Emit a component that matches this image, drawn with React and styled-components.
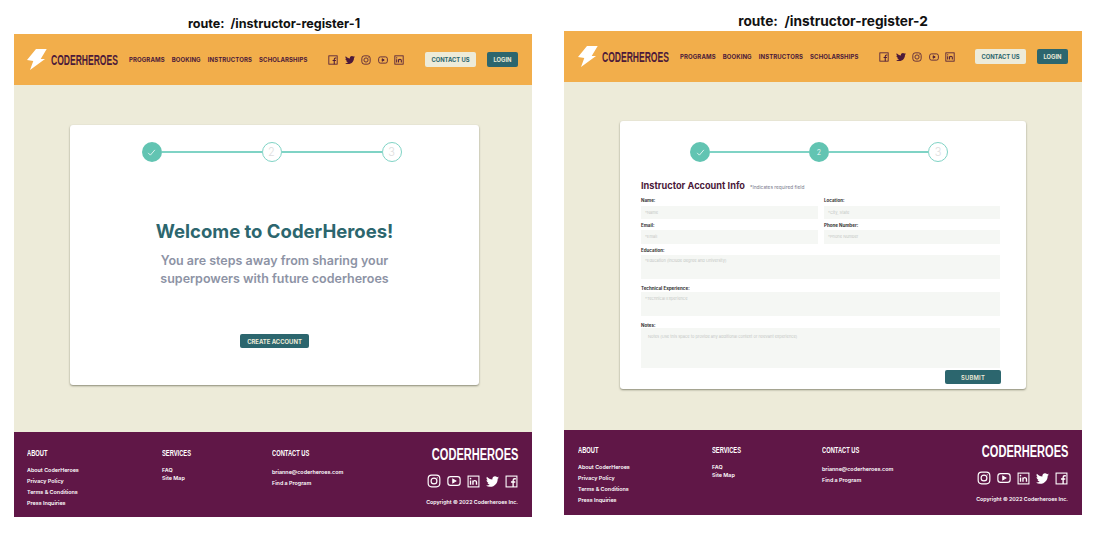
import styled, { createGlobalStyle } from 'styled-components';
import { FaTwitter } from 'react-icons/fa';

const GlobalStyle = createGlobalStyle`
  body {
    margin: 0;
    background: #fff;
    font-family: Inter, "Noto Sans", sans-serif;
  }
`;

const Page = styled.div`
  display: flex;
  gap: 32px;
  width: 1098px;
  height: 540px;
  padding-left: 14px;
  box-sizing: border-box;
  overflow: hidden;
`;

const Column = styled.div`
  width: 518px;
  padding-top: ${(p) => p.$top}px;
`;

const Route = styled.div`
  height: 20px;
  line-height: 20px;
  font-size: ${(p) => p.$size}px;
  font-weight: 700;
  color: #111;
  text-align: center;
  white-space: pre;
  padding-left: ${(p) => p.$shift}px;
`;

const Header = styled.header`
  display: flex;
  align-items: center;
  height: 51px;
  background: #f2ae4b;
  padding: 0 14px 0 ${(p) => p.$inset}px;
  box-sizing: border-box;
`;

const LogoLink = styled.div`
  display: flex;
  align-items: center;
  gap: 4px;
  width: 102px;
  flex-shrink: 0;
`;

const BoltMark = styled.svg`
  flex-shrink: 0;
`;

const LogoText = styled.span`
  font-family: "Liberation Sans", sans-serif;
  font-weight: 700;
  font-size: ${(p) => p.$size}px;
  line-height: 1;
  color: ${(p) => p.$color};
  white-space: nowrap;
  flex-shrink: 0;
  transform: scaleX(${(p) => p.$squeeze});
  transform-origin: ${(p) => p.$origin} center;
`;

const Nav = styled.nav`
  display: flex;
  gap: 7px;
  width: 199px;
  flex-shrink: 0;
`;

const NavItem = styled.span`
  font-size: 6px;
  font-weight: 700;
  color: #4c1a3a;
  letter-spacing: 0.1px;
  white-space: nowrap;
`;

const Socials = styled.div`
  display: flex;
  align-items: center;
  gap: ${(p) => p.$gap}px;
  color: ${(p) => p.$color};
`;

const FooterSocials = styled(Socials)`
  margin-top: 11px;
`;

const Actions = styled.div`
  display: flex;
  gap: 11px;
  margin-left: auto;
`;

const HeaderButton = styled.button`
  height: 15px;
  width: ${(p) => p.$width}px;
  padding: 0;
  border: 0;
  border-radius: 2px;
  font-family: inherit;
  font-size: 5.8px;
  font-weight: 700;
  background: ${(p) => (p.$light ? '#edebd9' : '#2c666e')};
  color: ${(p) => (p.$light ? '#2c666e' : '#edebd9')};
`;

const Main = styled.main`
  height: ${(p) => p.$height}px;
  background: #edebd9;
  box-sizing: border-box;
  padding: ${(p) => p.$top}px 0 0 56px;
`;

const Card = styled.section`
  width: ${(p) => p.$width}px;
  height: ${(p) => p.$height}px;
  background: #fff;
  border-radius: 3px;
  box-shadow: 0 1px 2px rgba(60, 60, 40, 0.55);
  box-sizing: border-box;
  padding-top: ${(p) => p.$top}px;
`;

const Stepper = styled.div`
  display: flex;
  align-items: center;
  justify-content: center;
  padding-right: ${(p) => p.$shift}px;
`;

const Step = styled.div`
  width: 20px;
  height: 20px;
  border-radius: 50%;
  box-sizing: border-box;
  display: flex;
  align-items: center;
  justify-content: center;
  font-weight: 300;
  background: ${(p) => (p.$on ? '#62c4b2' : '#fff')};
  border: ${(p) => (p.$on ? '0' : '1px solid #7fd3c5')};
  color: ${(p) => (p.$on ? '#fff' : '#ddd')};
  font-size: ${(p) => (p.$on ? 7 : 11)}px;
`;

const StepLine = styled.div`
  width: ${(p) => p.$width}px;
  height: 2px;
  background: #7fd3c5;
`;

const Welcome = styled.div`
  text-align: center;
  margin-top: 57px;
`;

const WelcomeTitle = styled.h1`
  margin: 0;
  font-size: 18.5px;
  line-height: 24px;
  font-weight: 700;
  color: #2c666e;
  white-space: nowrap;
`;

const WelcomeText = styled.p`
  margin: 9px 0 0;
  font-size: 12.5px;
  line-height: 18px;
  font-weight: 600;
  color: #8d93a5;
`;

const CreateButton = styled.button`
  display: block;
  width: 69px;
  height: 14px;
  margin: 46px auto 0;
  padding: 0;
  border: 0;
  border-radius: 2px;
  background: #2c666e;
  color: #edebd9;
  font-family: inherit;
  font-size: 5.9px;
  font-weight: 700;
`;

const Form = styled.form`
  padding: 18px 25px 0 21px;
`;

const FormHead = styled.div`
  display: flex;
  align-items: baseline;
  gap: 5px;
  height: 11px;
  line-height: 11px;
`;

const FormTitle = styled.h2`
  margin: 0;
  font-size: 9.2px;
  font-weight: 700;
  color: #4c1a3a;
  white-space: nowrap;
`;

const FormNote = styled.span`
  font-size: 4.8px;
  color: #77778a;
  white-space: nowrap;
`;

const FormGrid = styled.div`
  display: grid;
  grid-template-columns: 177px 176px;
  column-gap: 6px;
  margin-top: 7px;
`;

const Field = styled.div`
  grid-column: ${(p) => (p.$wide ? '1 / -1' : 'auto')};
`;

const Label = styled.div`
  height: 5px;
  line-height: 5px;
  font-size: 4.5px;
  font-weight: 700;
  color: #333;
  margin-bottom: ${(p) => p.$gap}px;
`;

const Input = styled.div`
  height: ${(p) => p.$height}px;
  margin-bottom: ${(p) => p.$gap}px;
  background: #f5f7f4;
  color: #c4c7c4;
  font-size: 4px;
  line-height: 5px;
  padding: ${(p) => p.$pad}px 0 0 ${(p) => p.$indent || 4}px;
  box-sizing: border-box;
  white-space: nowrap;
`;

const SubmitRow = styled.div`
  display: flex;
  justify-content: flex-end;
  margin-top: 2px;
`;

const SubmitButton = styled.button`
  width: 56px;
  height: 14px;
  padding: 0;
  border: 0;
  border-radius: 2px;
  background: #2c666e;
  color: #edebd9;
  font-family: inherit;
  font-size: 5.8px;
  font-weight: 600;
  letter-spacing: 0.2px;
`;

const Footer = styled.footer`
  display: grid;
  grid-template-columns: ${(p) => 148 - p.$inset}px 110px 1fr auto;
  height: 85px;
  background: #601747;
  padding: ${(p) => p.$top}px 14px 0 ${(p) => p.$inset}px;
  box-sizing: border-box;
  color: #fff;
`;

const FooterHead = styled.div`
  font-family: "Liberation Sans", sans-serif;
  font-size: 9px;
  font-weight: 700;
  line-height: 9px;
  margin-bottom: ${(p) => p.$gap || 9}px;
  transform: scaleX(0.64);
  transform-origin: left center;
  white-space: nowrap;
`;

const FooterLink = styled.div`
  font-size: 5.4px;
  font-weight: 600;
  line-height: 6px;
  margin-bottom: ${(p) => p.$gap}px;
  white-space: nowrap;
`;

const FooterBrand = styled.div`
  display: flex;
  flex-direction: column;
  align-items: flex-end;
  margin-top: -2px;
`;

const Copyright = styled.div`
  margin-top: 11px;
  font-size: 5.3px;
  font-weight: 600;
  line-height: 6px;
  white-space: nowrap;
`;

const FacebookIcon = ({ size }) => (
  <svg width={size} height={size} viewBox="0 0 24 24" fill="none" stroke="currentColor" strokeWidth="2">
    <rect x="2" y="2" width="20" height="20" />
    <path d="M20 7h-2c-1.700 0-3 1.300-3 3v12M11 13h8" strokeWidth="2.500" />
  </svg>
);

const InstagramIcon = ({ size }) => (
  <svg width={size} height={size} viewBox="0 0 24 24" fill="none" stroke="currentColor" strokeWidth="2">
    <rect x="2" y="2" width="20" height="20" rx="6" />
    <circle cx="12" cy="12" r="5" />
    <circle cx="17.500" cy="6.500" r="1" fill="currentColor" stroke="none" />
  </svg>
);

const YoutubeIcon = ({ size }) => (
  <svg width={size} height={size} viewBox="0 0 24 24" fill="none" stroke="currentColor" strokeWidth="2">
    <rect x="1.500" y="4.500" width="21" height="15" rx="4.500" />
    <path d="M10 9l5 3-5 3z" fill="currentColor" />
  </svg>
);

const LinkedinIcon = ({ size }) => (
  <svg width={size} height={size} viewBox="0 0 24 24" fill="none" stroke="currentColor" strokeWidth="2">
    <rect x="2" y="2" width="20" height="20" />
    <path d="M6.500 10v8M11 18v-8M11 13.500c0-4 6.500-4.500 6.500 0V18" strokeWidth="2.500" />
    <circle cx="6.500" cy="6.800" r="1.500" fill="currentColor" stroke="none" />
  </svg>
);

const CheckIcon = () => (
  <svg width="9" height="9" viewBox="0 0 24 24" fill="none" stroke="currentColor" strokeWidth="2">
    <path d="M3 13l6 6L21 5" />
  </svg>
);

const Bolt = () => (
  <BoltMark width="20" height="21" viewBox="0 0 20 21">
    <path d="M9 0h10.700l-6 10H18L3 21l3.300-9L0 11z" fill="#fff" />
  </BoltMark>
);

const Site = ({ children, inset, mainHeight, mainTop, footerTop }) => (
  <>
    <Header $inset={inset}>
      <LogoLink>
        <Bolt />
        <LogoText $size={14} $squeeze={0.61} $origin="left" $color="#4c1a3a">CODERHEROES</LogoText>
      </LogoLink>
      <Nav>
        <NavItem>PROGRAMS</NavItem>
        <NavItem>BOOKING</NavItem>
        <NavItem>INSTRUCTORS</NavItem>
        <NavItem>SCHOLARSHIPS</NavItem>
      </Nav>
      <Socials $gap={6.500} $color="#4c1a3a">
        <FacebookIcon size={10} />
        <FaTwitter size={10} />
        <InstagramIcon size={10} />
        <YoutubeIcon size={10} />
        <LinkedinIcon size={10} />
      </Socials>
      <Actions>
        <HeaderButton $light $width={51}>CONTACT US</HeaderButton>
        <HeaderButton $width={31}>LOGIN</HeaderButton>
      </Actions>
    </Header>
    <Main $height={mainHeight} $top={mainTop}>{children}</Main>
    <Footer $inset={inset} $top={footerTop}>
      <div>
        <FooterHead>ABOUT</FooterHead>
        <FooterLink $gap={5}>About CoderHeroes</FooterLink>
        <FooterLink $gap={5}>Privacy Policy</FooterLink>
        <FooterLink $gap={5}>Terms &amp; Conditions</FooterLink>
        <FooterLink $gap={5}>Press Inquiries</FooterLink>
      </div>
      <div>
        <FooterHead>SERVICES</FooterHead>
        <FooterLink $gap={2}>FAQ</FooterLink>
        <FooterLink $gap={2}>Site Map</FooterLink>
      </div>
      <div>
        <FooterHead $gap={11}>CONTACT US</FooterHead>
        <FooterLink $gap={5}>brianne@coderheroes.com</FooterLink>
        <FooterLink $gap={5}>Find a Program</FooterLink>
      </div>
      <FooterBrand>
        <LogoText $size={16} $squeeze={0.69} $origin="right" $color="#fff">CODERHEROES</LogoText>
        <FooterSocials $gap={6} $color="#fff">
          <InstagramIcon size={14} />
          <YoutubeIcon size={14} />
          <LinkedinIcon size={13} />
          <FaTwitter size={13} />
          <FacebookIcon size={13} />
        </FooterSocials>
        <Copyright>Copyright © 2022 Coderheroes Inc.</Copyright>
      </FooterBrand>
    </Footer>
  </>
);

const Steps = ({ current, shift, line }) => (
  <Stepper $shift={shift}>
    <Step $on><CheckIcon /></Step>
    <StepLine $width={line} />
    <Step $on={current >= 2}>2</Step>
    <StepLine $width={line} />
    <Step>3</Step>
  </Stepper>
);

const App = () => {
  return (
    <>
      <GlobalStyle />
      <Page>
        <Column $top={14}>
          <Route $size={12.600} $shift={2}>route:  /instructor-register-1</Route>
          <Site inset={13} mainHeight={347} mainTop={40} footerTop={17}>
            <Card $width={409} $height={260} $top={17}>
              <Steps current={1} shift={6} line={100} />
              <Welcome>
                <WelcomeTitle>Welcome to CoderHeroes!</WelcomeTitle>
                <WelcomeText>
                  You are steps away from sharing your
                  <br />
                  superpowers with future coderheroes
                </WelcomeText>
              </Welcome>
              <CreateButton>CREATE ACCOUNT</CreateButton>
            </Card>
          </Site>
        </Column>
        <Column $top={11}>
          <Route $size={13.700} $shift={20}>route:  /instructor-register-2</Route>
          <Site inset={14} mainHeight={348} mainTop={39} footerTop={16}>
            <Card $width={406} $height={268} $top={21}>
              <Steps current={2} shift={8} line={99} />
              <Form>
                <FormHead>
                  <FormTitle>Instructor Account Info</FormTitle>
                  <FormNote>*Indicates required field</FormNote>
                </FormHead>
                <FormGrid>
                  <Field>
                    <Label $gap={3}>Name:</Label>
                    <Input $height={13} $gap={4} $pad={4}>*Name</Input>
                  </Field>
                  <Field>
                    <Label $gap={3}>Location:</Label>
                    <Input $height={13} $gap={4} $pad={4}>*City, State</Input>
                  </Field>
                  <Field>
                    <Label $gap={2}>Email:</Label>
                    <Input $height={14} $gap={4} $pad={4}>*Email</Input>
                  </Field>
                  <Field>
                    <Label $gap={2}>Phone Number:</Label>
                    <Input $height={14} $gap={4} $pad={4}>*Phone Number</Input>
                  </Field>
                  <Field $wide>
                    <Label $gap={2}>Education:</Label>
                    <Input $height={24} $gap={7} $pad={3}>*Education (include degree and University)</Input>
                  </Field>
                  <Field $wide>
                    <Label $gap={1}>Technical Experience:</Label>
                    <Input $height={24} $gap={7} $pad={4}>*Technical Experience</Input>
                  </Field>
                  <Field $wide>
                    <Label $gap={0}>Notes:</Label>
                    <Input $height={40} $gap={0} $pad={6} $indent={7}>
                      Notes (Use this space to provide any additional context or relevant experience)
                    </Input>
                  </Field>
                </FormGrid>
                <SubmitRow>
                  <SubmitButton>SUBMIT</SubmitButton>
                </SubmitRow>
              </Form>
            </Card>
          </Site>
        </Column>
      </Page>
    </>
  );
};

export default App;
